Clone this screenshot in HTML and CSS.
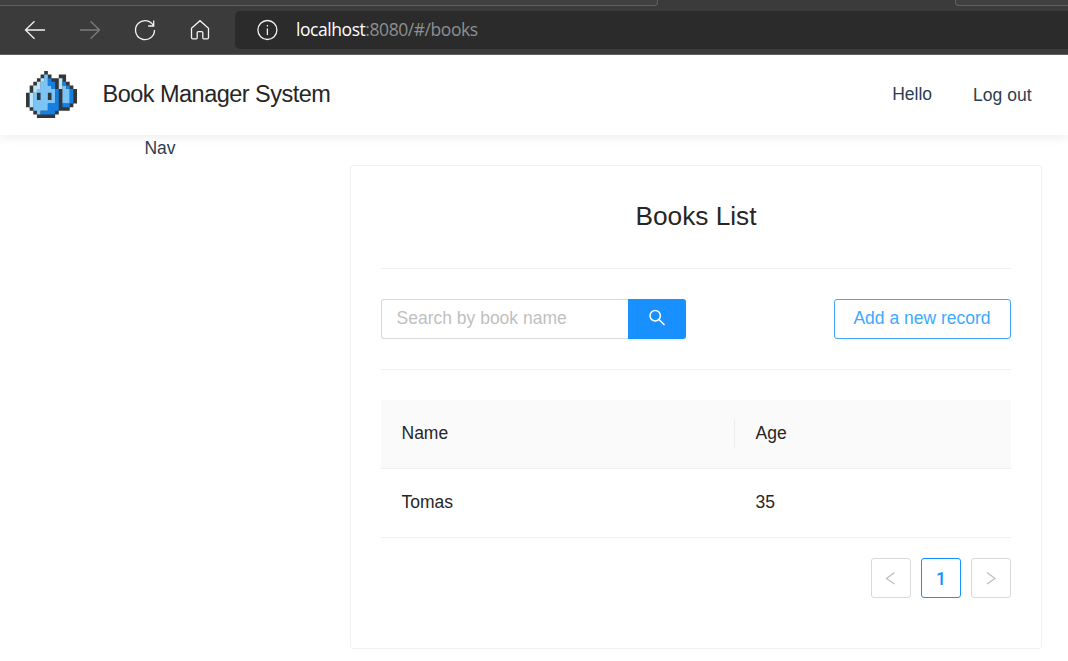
FILE: index.html
```html
<!DOCTYPE html>
<html lang="en">
<head>
<meta charset="utf-8">
<title>Book Manager System</title>
<link rel="stylesheet" href="styles.css">
</head>
<body>
<div class="browser">
  <div class="tabs"><div class="tab tab-left"></div><div class="tab tab-right"></div></div>
  <div class="toolbar">
    <div class="tools">
      <svg class="tool" viewBox="0 0 24 24"><path d="M22 12H2.5M11.5 3.2L2.5 12l9 8.8"/></svg>
      <svg class="tool tool-off" viewBox="0 0 24 24"><path d="M2 12h19.5M12.5 3.2l9 8.8-9 8.8"/></svg>
      <svg class="tool" viewBox="0 0 24 24"><path d="M20.9 8.8A9.5 9.5 0 1 0 21.5 12M20.7 2.5V8h-5.5"/></svg>
      <svg class="tool" viewBox="0 0 24 24"><path d="M3.5 10.2L12 2.7l8.500 7.500v9.300a1.300 1.300 0 0 1-1.300 1.300h-3.400a1 1 0 0 1-1-1v-5.100a1 1 0 0 0-1-1h-3.600a1 1 0 0 0-1 1v5.100a1 1 0 0 1-1 1H4.800a1.300 1.300 0 0 1-1.300-1.300z"/></svg>
    </div>
    <div class="address">
      <svg class="tool" viewBox="0 0 24 24"><circle cx="12.400" cy="12" r="9.500"/><path d="M12.400 10.500v6.500M12.400 7v1.500"/></svg>
      <span class="url"><span class="host">localhost</span>:8080/#/books</span>
    </div>
  </div>
</div>

<header class="header">
  <svg class="logo" viewBox="0 0 14 13" preserveAspectRatio="none">
    <!-- dark silhouette, then the water tones row by row -->
    <path fill="#343638" d="M5 0h1v1h1v1h2V1h2v1h0v1h1v1h1v1h1v4h-1v1h-1v1H9v1H8v1H3v-1H2v-1H1v-1H0V6h1V4h1V3h1V2h1V1h1z"/>
    <path stroke="#7cc4f4" d="M5 1.500h1M5 2.500h1M4 3.500h2M4 4.500h3M3 5.500h5M2 6.500h1M4 6.500h2M7 6.500h1M2 7.500h1M4 7.500h2M7 7.500h1M2 8.500h6M2 9.500h4M2 10.500h4M3 11.500h1M10 4.500h1M10 5.500h2M10 6.500h2M10 7.500h2M10 8.500h2"/>
    <path stroke="#b9e6fb" d="M4 2.500h1M3 3.500h1M2 4.500h2M2 5.500h1M1 6.500h1M1 7.500h1M1 8.500h1M1 9.500h1M9 2.500h1M9 3.500h1M9 4.500h1"/>
    <path stroke="#147fe0" d="M6 2.500h1M6 3.500h2M7 4.500h1M8 5.500h1M8 6.500h1M8 7.500h1M8 8.500h1M6 9.500h3M6 10.500h3M4 11.500h4M10 3.500h1M11 4.500h1M12 5.500h1M12 6.500h1M12 7.500h1M12 8.500h1M10 9.500h2"/>
  </svg>
  <div class="brand">Book Manager System</div>
  <nav class="links"><a class="link">Hello</a><a class="link logout">Log out</a></nav>
</header>

<main class="page">
  <aside class="side">Nav</aside>
  <section class="card">
    <h1 class="title">Books List</h1>
    <div class="actions">
      <div class="search">
        <input class="field" type="text" placeholder="Search by book name">
        <button class="go" aria-label="Search">
          <svg class="lens" viewBox="0 0 18 18"><circle cx="7.200" cy="6.700" r="5.200"/><path d="M11 10.500l5.500 5.500"/></svg>
        </button>
      </div>
      <button class="add">Add a new record</button>
    </div>
    <table class="table">
      <thead><tr><th class="name"><div class="cell split">Name</div></th><th><div class="cell">Age</div></th></tr></thead>
      <tbody><tr><td>Tomas</td><td>35</td></tr></tbody>
    </table>
    <div class="pager">
      <div class="item"><svg class="chev" viewBox="0 0 14 14"><path d="M10.500 1.500L2.500 7.500l8 5.500"/></svg></div>
      <div class="item current">1</div>
      <div class="item"><svg class="chev" viewBox="0 0 14 14"><path d="M3 1.500L11 7.500l-8 5.500"/></svg></div>
    </div>
  </section>
</main>
</body>
</html>
```

FILE: styles.css
```css
* { box-sizing: border-box; }
body {
  margin: 0;
  height: 661px;
  overflow: hidden;
  background: #fff;
  color: #262626;
  font: 17.5px/28px "Liberation Sans", Arial, sans-serif;
}
svg { display: block; fill: none; }
button, input { font: inherit; margin: 0; }

.browser { position: relative; z-index: 1; height: 55px; background: #3b3b3b; border-bottom: 1px solid #606060; }
.tabs { display: flex; justify-content: space-between; height: 6px; }
.tab { height: 6px; background: #404040; border-bottom: 1px solid #606060; }
.tab-left { width: 658px; border-right: 1px solid #606060; border-bottom-right-radius: 4px; }
.tab-right { width: 113px; border-left: 1px solid #606060; border-bottom-left-radius: 4px; }
.toolbar { display: flex; padding-top: 5px; }
.tools { display: flex; align-items: center; gap: 31px; width: 235px; padding-left: 23px; }
.tool { width: 24px; height: 24px; stroke: #f2f2f2; stroke-width: 1.3; }
.tool-off { stroke: #7c7c7c; }
.address {
  display: flex;
  align-items: center;
  gap: 17px;
  flex: 1;
  height: 38px;
  padding-left: 20px;
  background: #2b2b2b;
  border-radius: 5px 0 0 5px;
}
.url { padding-bottom: 2px; color: #8d8f91; font: 17.5px/24px "Open Sans", sans-serif; letter-spacing: -0.44px; }
.host { color: #fff; }

.header {
  display: flex;
  align-items: center;
  height: 80px;
  padding: 0 36.5px 0 26px;
  box-shadow: 0 2px 10px #ececed;
}
.logo { width: 51px; height: 47px; margin-bottom: 1px; }
.brand { margin-left: 25.5px; padding-bottom: 2px; font-size: 23.5px; letter-spacing: -0.52px; }
.links { display: flex; gap: 41px; margin-left: auto; padding-bottom: 2px; color: #2c3e50; }
.logout { padding-top: 1px; }

.page { display: flex; }
.side { width: 320px; line-height: 26px; text-align: center; color: #2c3e50; }
.card {
  width: 692px;
  height: 484px;
  margin: 30px 0 0 30px;
  padding: 0 30px;
  border: 1px solid #f0f0f0;
  border-radius: 3px;
}
.title {
  height: 103px;
  margin: 0;
  border-bottom: 1px solid #f0f0f0;
  font-size: 26.25px;
  font-weight: 400;
  line-height: 100px;
  text-align: center;
}
.actions {
  display: flex;
  justify-content: space-between;
  height: 101px;
  padding: 30px 0;
  border-bottom: 1px solid #f0f0f0;
}
.search { display: flex; width: 305px; }
.field {
  flex: 1;
  min-width: 0;
  padding: 0 14.5px 2px;
  border: 1px solid #d9d9d9;
  border-right: 0;
  border-radius: 3px 0 0 3px;
}
.field::placeholder { color: #bfbfbf; opacity: 1; }
.go {
  width: 58px;
  padding: 0 20px 2px;
  border: 0;
  border-radius: 0 3px 3px 0;
  background: #1890ff;
  box-shadow: 0 2px 0 rgba(0, 0, 0, 0.045);
}
.lens { width: 18px; height: 18px; stroke: #fff; stroke-width: 1.5; }
.add {
  width: 177px;
  padding: 0 1px 2px 0;
  border: 1px solid #40a9ff;
  border-radius: 3px;
  background: #fff;
  color: #40a9ff;
}
.table { width: 100%; margin-top: 30px; border-spacing: 0; table-layout: fixed; }
.name { width: 354px; }
.table th { height: 69px; padding: 0; background: #fafafa; font-weight: 400; text-align: left; }
.table th, .table td { border-bottom: 1px solid #f0f0f0; }
.table td { height: 69px; padding: 0 20.5px 2px; }
.cell { padding: 0 20.5px; line-height: 26px; height: 28px; }
.split { border-right: 1px solid #ededed; }
.pager { display: flex; justify-content: flex-end; gap: 10px; padding-top: 20px; }
.item {
  display: flex;
  align-items: center;
  justify-content: center;
  width: 40px;
  height: 40px;
  border: 1px solid #d9d9d9;
  border-radius: 3px;
}
.current { padding-top: 1px; border-color: #1890ff; color: #1890ff; font-family: Roboto, sans-serif; font-weight: 500; }
.chev { width: 14px; height: 14px; stroke: #bfbfbf; stroke-width: 1.3; }
```
